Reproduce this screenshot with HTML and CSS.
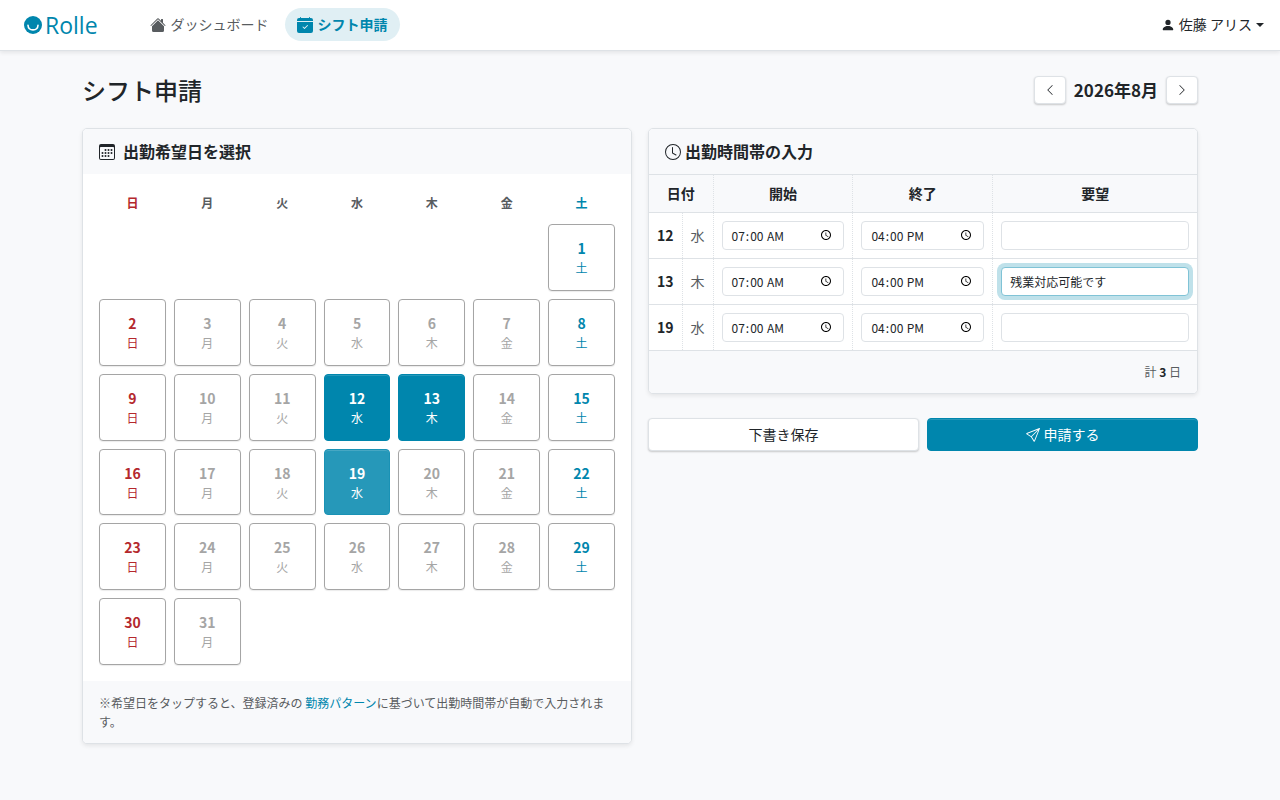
FILE: index.html
```
<!DOCTYPE html>
<html lang="ja">
<head>
    <meta charset="UTF-8">
    <meta name="viewport" content="width=device-width, initial-scale=1.0">
    <title>シフト申請 - Rolle</title>
    <link rel="stylesheet" href="styles.css">
</head>
<body>
    <!-- ナビゲーション -->
    <header class="navbar">
        <a class="brand" href="#">
            <svg class="brand-mark" viewBox="0 0 18 18" aria-hidden="true">
                <circle cx="9" cy="9" r="9" fill="currentColor"/>
                <path d="M4 9.2c.4 6.2 9.6 6.2 10 0" fill="none" stroke="#fff" stroke-width="1.6" stroke-linecap="round"/>
            </svg>
            <span>Rolle</span>
        </a>
        <nav class="nav">
            <a class="nav-link" href="#">
                <svg class="icon" viewBox="0 0 16 16" aria-hidden="true"><path d="M8.707 1.5a1 1 0 0 0-1.414 0L.646 8.146a.5.5 0 0 0 .708.708L8 2.207l6.646 6.647a.5.5 0 0 0 .708-.708L13 5.793V2.5a.5.5 0 0 0-.5-.5h-1a.5.5 0 0 0-.5.5v1.293z"/><path d="m8 3.293 6 6V13.5a1.5 1.5 0 0 1-1.5 1.5h-9A1.5 1.5 0 0 1 2 13.5V9.293z"/></svg>
                ダッシュボード
            </a>
            <a class="nav-link active" href="#" aria-current="page">
                <svg class="icon" viewBox="0 0 16 16" aria-hidden="true"><path d="M4 .5a.5.5 0 0 0-1 0V1H2a2 2 0 0 0-2 2v1h16V3a2 2 0 0 0-2-2h-1V.5a.5.5 0 0 0-1 0V1H4zM16 14V5H0v9a2 2 0 0 0 2 2h12a2 2 0 0 0 2-2m-5.146-5.146-3 3a.5.5 0 0 1-.708 0l-1.5-1.5a.5.5 0 0 1 .708-.708L7.5 10.793l2.646-2.647a.5.5 0 0 1 .708.708"/></svg>
                シフト申請
            </a>
        </nav>
        <button class="user-menu" type="button">
            <svg class="icon-user" viewBox="0 0 16 16" aria-hidden="true"><path d="M3 14s-1 0-1-1 1-4 6-4 6 3 6 4-1 1-1 1zm5-6a3 3 0 1 0 0-6 3 3 0 0 0 0 6"/></svg>
            佐藤 アリス
        </button>
    </header>

    <main class="container">
        <div class="page-head">
            <h1>シフト申請</h1>
            <div class="month-nav">
                <button class="btn btn-month" type="button" aria-label="前の月">
                    <svg viewBox="0 0 16 16" aria-hidden="true"><path d="M11.354 1.646a.5.5 0 0 1 0 .708L5.707 8l5.647 5.646a.5.5 0 0 1-.708.708l-6-6a.5.5 0 0 1 0-.708l6-6a.5.5 0 0 1 .708 0"/></svg>
                </button>
                <h2>2026年8月</h2>
                <button class="btn btn-month" type="button" aria-label="次の月">
                    <svg viewBox="0 0 16 16" aria-hidden="true"><path d="M4.646 1.646a.5.5 0 0 1 .708 0l6 6a.5.5 0 0 1 0 .708l-6 6a.5.5 0 0 1-.708-.708L10.293 8 4.646 2.354a.5.5 0 0 1 0-.708"/></svg>
                </button>
            </div>
        </div>

        <div class="columns">
            <!-- カレンダー -->
            <section class="card">
                <h3 class="card-header gap-wide">
                    <svg class="icon" viewBox="0 0 16 16" aria-hidden="true"><path d="M14 0H2a2 2 0 0 0-2 2v12a2 2 0 0 0 2 2h12a2 2 0 0 0 2-2V2a2 2 0 0 0-2-2M1 3.857C1 3.384 1.448 3 2 3h12c.552 0 1 .384 1 .857v10.286c0 .473-.448.857-1 .857H2c-.552 0-1-.384-1-.857z"/><path d="M6.5 7a1 1 0 1 0 0-2 1 1 0 0 0 0 2m3 0a1 1 0 1 0 0-2 1 1 0 0 0 0 2m3 0a1 1 0 1 0 0-2 1 1 0 0 0 0 2m-9 3a1 1 0 1 0 0-2 1 1 0 0 0 0 2m3 0a1 1 0 1 0 0-2 1 1 0 0 0 0 2m3 0a1 1 0 1 0 0-2 1 1 0 0 0 0 2m3 0a1 1 0 1 0 0-2 1 1 0 0 0 0 2m-9 3a1 1 0 1 0 0-2 1 1 0 0 0 0 2m3 0a1 1 0 1 0 0-2 1 1 0 0 0 0 2m3 0a1 1 0 1 0 0-2 1 1 0 0 0 0 2"/></svg>
                    出勤希望日を選択
                </h3>
                <div class="calendar" id="calendar"></div>
                <p class="card-footer note">※希望日をタップすると、登録済みの <a href="#">勤務パターン</a>に基づいて出勤時間帯が自動で入力されます。</p>
            </section>

            <!-- 出勤時間帯 -->
            <div class="side">
                <section class="card">
                    <h3 class="card-header">
                        <svg class="icon" viewBox="0 0 16 16" aria-hidden="true"><path d="M8 3.5a.5.5 0 0 0-1 0V9a.5.5 0 0 0 .252.434l3.5 2a.5.5 0 0 0 .496-.868L8 8.71z"/><path d="M8 16A8 8 0 1 0 8 0a8 8 0 0 0 0 16m7-8A7 7 0 1 1 1 8a7 7 0 0 1 14 0"/></svg>
                        出勤時間帯の入力
                    </h3>
                    <table class="shift-table">
                        <thead>
                            <tr>
                                <th colspan="2">日付</th>
                                <th class="col-time">開始</th>
                                <th class="col-time">終了</th>
                                <th class="col-note">要望</th>
                            </tr>
                        </thead>
                        <tbody>
                            <tr>
                                <td class="day">12</td>
                                <td class="week">水</td>
                                <td><input type="time" value="07:00" aria-label="12日 開始"></td>
                                <td><input type="time" value="16:00" aria-label="12日 終了"></td>
                                <td><input type="text" aria-label="12日 要望"></td>
                            </tr>
                            <tr>
                                <td class="day">13</td>
                                <td class="week">木</td>
                                <td><input type="time" value="07:00" aria-label="13日 開始"></td>
                                <td><input type="time" value="16:00" aria-label="13日 終了"></td>
                                <td><input class="focused" type="text" value="残業対応可能です" aria-label="13日 要望"></td>
                            </tr>
                            <tr>
                                <td class="day">19</td>
                                <td class="week">水</td>
                                <td><input type="time" value="07:00" aria-label="19日 開始"></td>
                                <td><input type="time" value="16:00" aria-label="19日 終了"></td>
                                <td><input type="text" aria-label="19日 要望"></td>
                            </tr>
                        </tbody>
                    </table>
                    <p class="card-footer total">計 <strong>3</strong> 日</p>
                </section>

                <div class="actions">
                    <button class="btn" type="button">下書き保存</button>
                    <button class="btn btn-primary" type="submit">
                        <svg class="icon-send" viewBox="0 0 16 16" aria-hidden="true"><path d="M15.854.146a.5.5 0 0 1 .11.54l-5.819 14.547a.75.75 0 0 1-1.329.124l-3.178-4.995L.643 7.184a.75.75 0 0 1 .124-1.33L15.314.037a.5.5 0 0 1 .54.11ZM6.636 10.07l2.761 4.338L14.13 2.576zm6.787-8.201L1.591 6.602l4.339 2.76z"/></svg>
                        申請する
                    </button>
                </div>
            </div>
        </div>
    </main>

    <script>
        const weekdays = ['日', '月', '火', '水', '木', '金', '土'];
        const selected = [12, 13, 19];
        const hovered = 19;
        const calendar = document.getElementById('calendar');

        // 曜日の見出し
        weekdays.forEach((name, i) => {
            const head = document.createElement('div');
            head.className = `weekday w${i}`;
            head.textContent = name;
            calendar.appendChild(head);
        });

        // 2026年8月1日は土曜日
        const firstDay = new Date(2026, 7, 1).getDay();
        for (let d = 1; d <= 31; d++) {
            const w = (firstDay + d - 1) % 7;
            const date = document.createElement('button');
            date.type = 'button';
            date.className = `date w${w}`;
            if (d === 1) date.classList.add('first');
            if (selected.includes(d)) date.classList.add('selected');
            if (d === hovered) date.classList.add('hovered');
            date.setAttribute('aria-pressed', selected.includes(d));
            date.innerHTML = `<b>${d}</b><span>${weekdays[w]}</span>`;
            date.addEventListener('click', () => date.classList.toggle('selected'));
            calendar.appendChild(date);
        }
    </script>
</body>
</html>
```
FILE: styles.css
```
/* 共通 */
* {
    margin: 0;
    padding: 0;
    box-sizing: border-box;
}

body {
    background: #f8f9fb;
    color: #212529;
    font-family: "Noto Sans CJK JP", sans-serif;
    font-size: 14px;
    line-height: 21px;
}

a {
    color: #0086ad;
    text-decoration: none;
}

button,
input {
    font: inherit;
    color: inherit;
}

button {
    cursor: pointer;
}

svg {
    fill: currentColor;
    flex-shrink: 0;
}

.icon {
    width: 16px;
    height: 16px;
}

/* ナビゲーション */
.navbar {
    display: flex;
    align-items: center;
    padding: 8px 16px 9px 24px;
    background: #fff;
    border-bottom: 1px solid #dee2e6;
    box-shadow: 0 2px 4px rgba(0, 0, 0, 0.08);
}

.brand {
    display: flex;
    align-items: center;
    gap: 3px;
    margin-right: 40px;
    font-family: "Open Sans", sans-serif;
    font-size: 23px;
    font-weight: 400;
    line-height: 32px;
}

.brand-mark {
    width: 18px;
    height: 18px;
}

.nav {
    display: flex;
    gap: 4px;
}

.nav-link {
    display: flex;
    align-items: center;
    gap: 5px;
    padding: 6px 12px;
    border-radius: 17px;
    color: #585c5f;
}

.nav-link.active {
    background: #e0eff4;
    color: #0086ad;
    font-weight: 700;
}

.user-menu {
    display: flex;
    align-items: center;
    gap: 4px;
    margin-left: auto;
    border: 0;
    background: none;
}

.user-menu::after {
    content: "";
    border-top: 4px solid;
    border-left: 4px solid transparent;
    border-right: 4px solid transparent;
}

.icon-user {
    width: 14px;
    height: 14px;
}

/* 見出し */
.container {
    max-width: 1140px;
    margin: 0 auto;
    padding: 24px 12px;
}

.page-head {
    display: flex;
    justify-content: space-between;
    align-items: center;
    margin-bottom: 24px;
}

h1 {
    font-size: 24px;
    font-weight: 500;
    line-height: 29px;
}

h2 {
    font-size: 17px;
    font-weight: 700;
    line-height: 21px;
}

.month-nav {
    display: flex;
    align-items: center;
    gap: 8px;
}

/* ボタン */
.btn {
    display: flex;
    justify-content: center;
    align-items: center;
    gap: 4px;
    padding: 5px 12px;
    border: 1px solid #dee2e6;
    border-radius: 4px;
    background: #fff;
    box-shadow: 0 1px 2px rgba(0, 0, 0, 0.2);
}

.btn-primary {
    border-color: #0086ad;
    background: #0086ad;
    box-shadow: inset 0 1px 0 rgba(255, 255, 255, 0.15);
    color: #fff;
}

.btn-month {
    padding: 7px 9px;
}

.btn-month svg {
    width: 12px;
    height: 12px;
}

.icon-send {
    width: 14px;
    height: 14px;
}

/* カード */
.columns {
    display: grid;
    grid-template-columns: 1fr 1fr;
    gap: 16px;
    align-items: start;
}

.card {
    overflow: hidden;
    border: 1px solid #dee2e6;
    border-radius: 5px;
    background: #fff;
    box-shadow: 0 2px 4px rgba(0, 0, 0, 0.08);
}

.card-header {
    display: flex;
    align-items: center;
    gap: 4px;
    padding: 12px 16px;
    background: #f8f9fb;
    font-size: 16px;
    font-weight: 700;
    line-height: 21px;
}

.gap-wide {
    gap: 8px;
}

.card-footer {
    padding: 12px 16px;
    background: #f8f9fb;
    color: #585c5f;
    font-size: 12px;
    line-height: 18px;
}

.note {
    line-height: 19px;
}

/* カレンダー */
.calendar {
    display: grid;
    grid-template-columns: repeat(7, 1fr);
    gap: 8px;
    padding: 16px;
}

.weekday {
    padding: 4px 0;
    color: #585c5f;
    font-size: 12px;
    font-weight: 700;
    line-height: 18px;
    text-align: center;
}

.date {
    display: flex;
    flex-direction: column;
    justify-content: center;
    align-items: center;
    aspect-ratio: 1;
    border: 1px solid #a5a5a5;
    border-radius: 4px;
    background: #fff;
    box-shadow: 0 1px 1px rgba(0, 0, 0, 0.08);
    color: #a5a5a5;
    line-height: 21px;
}

.date span {
    font-size: 12px;
    line-height: 18px;
}

.first {
    grid-column: 7;
}

.w0 {
    color: #b4282d;
}

.w6 {
    color: #0086ad;
}

.date.selected {
    border-color: #0086ad;
    background: #0086ad;
    box-shadow: inset 0 1px 0 rgba(255, 255, 255, 0.15);
    color: #fff;
}

.date.selected.hovered {
    border-color: #1a92b5;
    background: #2698b9;
}

/* 出勤時間帯 */
.shift-table {
    width: 100%;
    border-collapse: collapse;
    border-top: 1px solid #dee2e6;
}

.shift-table th,
.shift-table td {
    padding: 8px;
    border-bottom: 1px solid #dee2e6;
    text-align: center;
}

.shift-table th + th,
.shift-table td + td {
    border-left: 1px dotted #dee2e6;
}

.shift-table th {
    background: #f8f9fb;
    font-weight: 700;
}

.col-time {
    width: 140px;
}

.col-note {
    width: 205px;
}

.day {
    font-weight: 700;
}

.week {
    color: #585c5f;
}

.shift-table input {
    display: block;
    width: 100%;
    height: 29px;
    padding: 4px 8px;
    border: 1px solid #dee2e6;
    border-radius: 4px;
    background: #fff;
    font-size: 12px;
    line-height: 18px;
    outline: none;
}

.shift-table input:focus,
.shift-table .focused {
    border-color: #80c3d6;
    box-shadow: 0 0 0 4px #bfe1ea;
}

.total {
    text-align: right;
}

.total strong {
    color: #212529;
}

.actions {
    display: grid;
    grid-template-columns: 1fr 1fr;
    gap: 8px;
    margin-top: 24px;
}
```
